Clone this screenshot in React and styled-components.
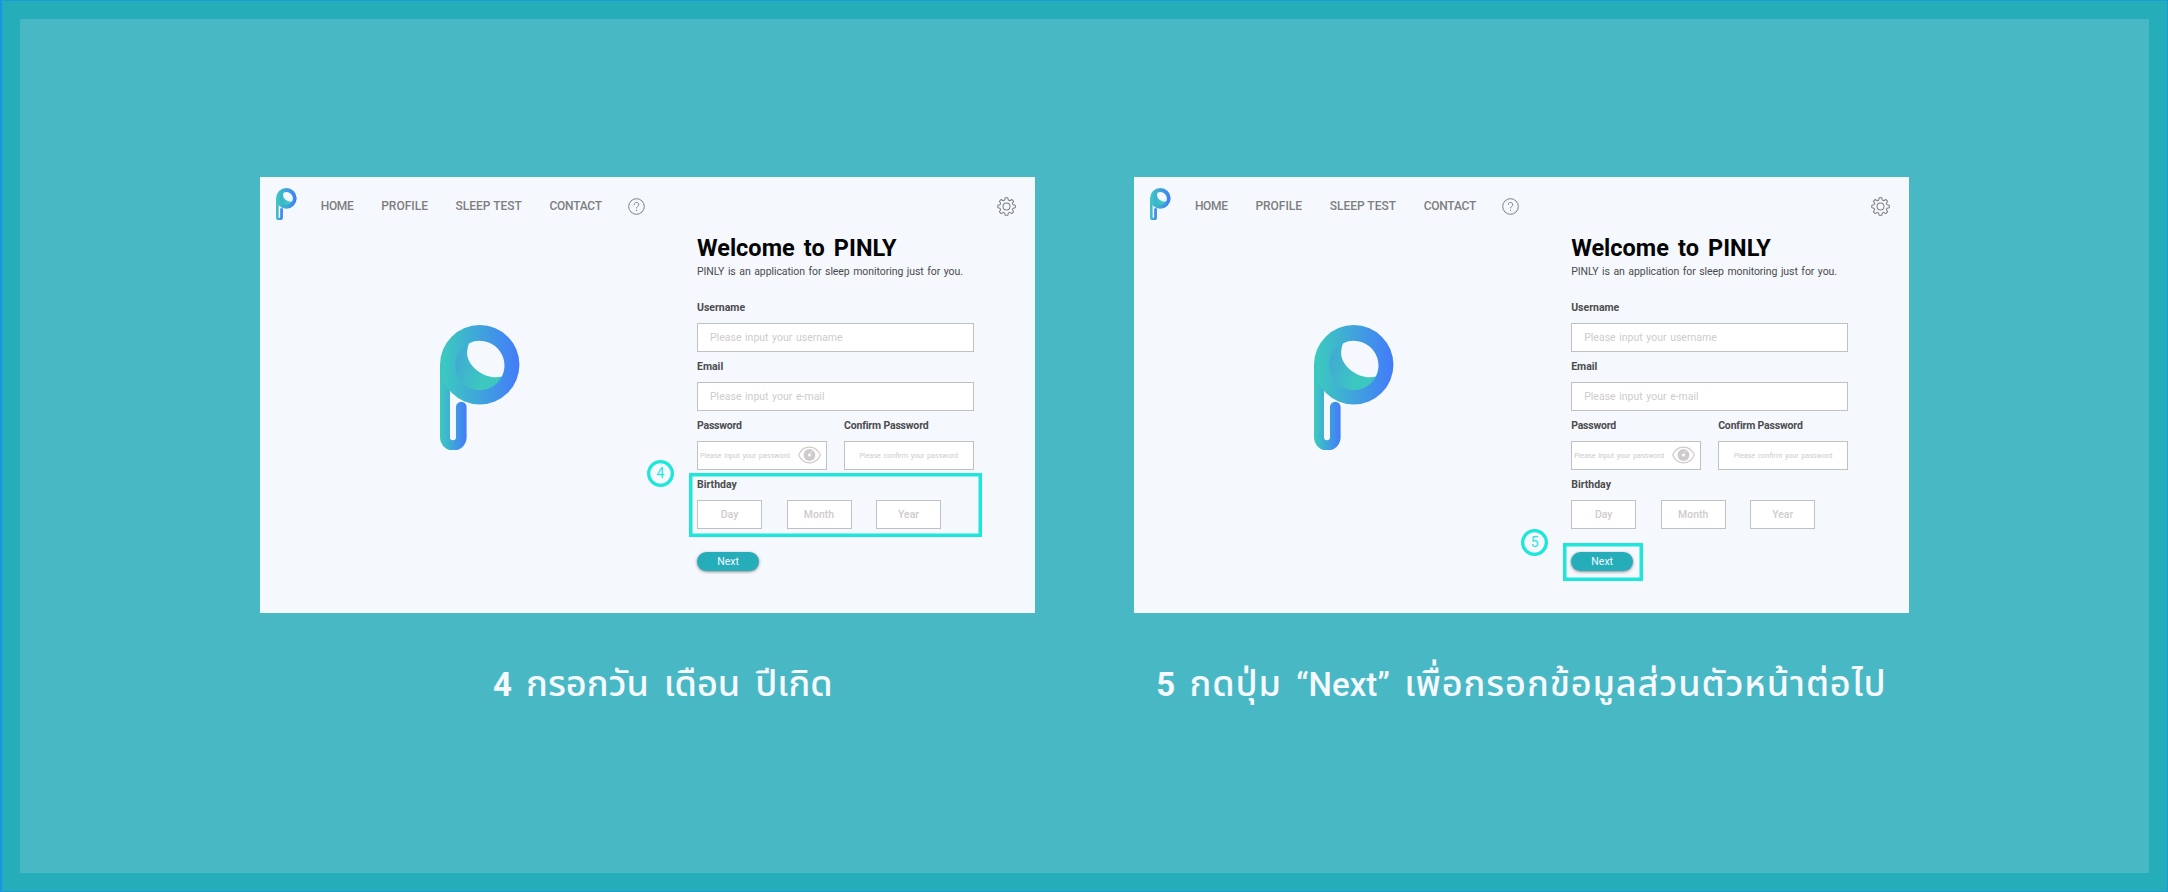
import React from "react";
import styled, { createGlobalStyle } from "styled-components";

const latin = `Roboto, "Liberation Sans", sans-serif`;

const GlobalStyle = createGlobalStyle`
  * { box-sizing: border-box; }
  body { margin: 0; font-family: ${latin}; }
`;

const Page = styled.div`
  width: 2168px;
  height: 892px;
  border: 1px solid #1e9ad6;
  border-left: 2px solid #1c94e4;
  background: #25adba;
  padding: 18px;
`;

const Board = styled.main`
  height: 854px;
  background: #48b8c5;
  display: flex;
  gap: 99.6px;
  padding: 158px 0 0 240px;
`;

const Step = styled.section`
  width: 774.6px;
  display: flex;
  flex-direction: column;
  align-items: center;
`;

const Card = styled.div`
  position: relative;
  width: 100%;
  height: 435.5px;
  background: #f5f9fe;
  display: flex;
  flex-direction: column;
`;

const TopBar = styled.header`
  height: 58px;
  flex: none;
  display: flex;
  align-items: center;
  padding: 0 18.5px 0 16px;
`;

const BrandMark = styled.span`
  display: flex;
  margin: -4px 24px 0 0;
`;

const Nav = styled.nav`
  display: flex;
  flex: 1;
  align-items: center;
`;

const NavItem = styled.span`
  width: ${(p) => p.$width}px;
  font-size: 12px;
  font-weight: 500;
  line-height: 14px;
  letter-spacing: ${(p) => p.$spacing || 0}px;
  white-space: nowrap;
  color: #7e7e7f;
`;

const Body = styled.div`
  flex: 1;
  display: flex;
`;

const Hero = styled.div`
  width: 437px;
  padding: 89.5px 0 0 180px;
`;

const Form = styled.div`
  width: 277px;
`;

const Title = styled.h1`
  margin: 0;
  font-size: 23.5px;
  line-height: 27px;
  font-weight: 700;
  word-spacing: 3.3px;
  white-space: nowrap;
  color: #050505;
`;

const Subtitle = styled.p`
  margin: 3px 0 22px;
  font-size: 10.5px;
  line-height: 14px;
  letter-spacing: -0.07px;
  word-spacing: 1px;
  white-space: nowrap;
  color: #4a4a4c;
`;

const Row = styled.div`
  display: flex;
  gap: ${(p) => p.$gap}px;
`;

const Field = styled.div`
  width: ${(p) => p.$width}px;
  height: 59px;
`;

const Label = styled.div`
  height: 14px;
  margin-bottom: 7.5px;
  font-size: 10.5px;
  line-height: 14px;
  font-weight: 700;
  letter-spacing: ${(p) => p.$spacing || 0}px;
  white-space: nowrap;
  color: #4c4c4e;
`;

const Box = styled.div`
  width: ${(p) => p.$width || 276.5}px;
  height: 29px;
  flex: none;
  display: flex;
  align-items: center;
  justify-content: ${(p) => (p.$center ? "center" : "flex-start")};
  padding-left: ${(p) => p.$inset || 0}px;
  border: 1px solid #bfc1c5;
  background: #fff;
  font-size: ${(p) => p.$size || 10.5}px;
  font-weight: ${(p) => p.$weight || 400};
  letter-spacing: ${(p) => p.$spacing || 0}px;
  word-spacing: 1px;
  white-space: nowrap;
  color: #cfcbcc;
`;

const EyeSlot = styled.span`
  display: flex;
  margin-left: auto;
  padding-right: 5px;
`;

const NextButton = styled.div`
  width: 62px;
  height: 19.5px;
  margin-top: 14.5px;
  border-radius: 10px;
  background: #25adba;
  box-shadow: 0 1px 3px rgba(60, 60, 60, 0.6);
  color: #f6f9ff;
  font-size: 10.5px;
  line-height: 19px;
  text-align: center;
`;

const Highlight = styled.div`
  position: absolute;
  left: ${(p) => p.$x}px;
  top: ${(p) => p.$y}px;
  width: ${(p) => p.$w}px;
  height: ${(p) => p.$h}px;
  box-shadow: inset 0 0 0 3.5px #1fe6da;
`;

const Badge = styled.div`
  position: absolute;
  left: 387px;
  top: ${(p) => p.$y}px;
  width: 27px;
  height: 27px;
  box-shadow: inset 0 0 0 3.3px #1fe6da;
  border-radius: 50%;
  color: #1fe6da;
  font-size: 14px;
  line-height: 27px;
  text-align: center;
`;

const Caption = styled.h2`
  margin: 46.5px 0 0 ${(p) => p.$shift || 0}px;
  font-size: 33px;
  line-height: 50px;
  font-weight: 500;
  word-spacing: 6px;
  white-space: nowrap;
  color: #f6f9ff;
`;

const Digit = styled.span`
  font-weight: 700;
`;

const Thai = styled.span`
  font-family: Roboto, "Noto Sans Thai", "Noto Sans", sans-serif;
  font-size: 36px;
  letter-spacing: ${(p) => p.$spacing || 0}px;
`;

function Logo({ width, id }) {
  const ring = `${id}-ring`;
  const stem = `${id}-stem`;
  const fold = `${id}-fold`;
  return (
    <svg width={width} height={width * 1.577} viewBox="60 44 239.5 377.7">
      <defs>
        <linearGradient id={ring} gradientUnits="userSpaceOnUse" x1="60" y1="0" x2="299" y2="0">
          <stop offset="0.05" stopColor="#3cc8c0" />
          <stop offset="1" stopColor="#437bfa" />
        </linearGradient>
        <linearGradient id={stem} gradientUnits="userSpaceOnUse" x1="60" y1="0" x2="140" y2="0">
          <stop offset="0.05" stopColor="#3cc8c0" />
          <stop offset="1" stopColor="#437bfa" />
        </linearGradient>
        <linearGradient id={fold} gradientUnits="userSpaceOnUse" x1="106" y1="175" x2="190" y2="205">
          <stop offset="0" stopColor="#40acd2" />
          <stop offset="1" stopColor="#3cc8c0" />
        </linearGradient>
      </defs>
      <path
        fill={`url(#${stem})`}
        d="M60 164V382a40 40 0 0 0 80 0V291a16 16 0 0 0-32 0V382a9 9 0 0 1-18 0V164Z"
      />
      <circle cx="179.5" cy="163.5" r="119.5" fill={`url(#${ring})`} />
      <circle cx="179.5" cy="166" r="74" fill={`url(#${fold})`} />
      <path
        fill="#f5f9fe"
        d="M148 99A74 74 0 0 1 246 199C200 212 136 168 142 122C143 112 145 104 148 99Z"
      />
    </svg>
  );
}

function HelpIcon() {
  return (
    <svg width="17" height="17" viewBox="0 0 17 17" fill="none" stroke="#7e7e7f" strokeWidth="1">
      <circle cx="8.5" cy="8.5" r="7.8" />
      <path d="M6.2 6.8C6.2 3.7 10.8 3.8 10.8 6.6C10.8 8.4 8.5 8.4 8.5 10.4M8.5 11.8V12.9" />
    </svg>
  );
}

function GearIcon() {
  return (
    <svg width="19" height="19" viewBox="0 0 24 24" fill="none" stroke="#7e7e7f" strokeWidth="1.3" strokeLinejoin="round">
      <circle cx="12" cy="12" r="4.4" />
      <path d="M10.3 1h3.4l.6 2.9 1.9.8 2.5-1.6 2.3 2.3-1.6 2.5.8 1.9 2.9.6v3.3l-2.9.6-.8 1.9 1.6 2.5-2.3 2.3-2.5-1.6-1.9.8-.6 2.9h-3.4l-.6-2.9-1.9-.8-2.5 1.6L3 18.7l1.6-2.5-.8-1.9L1 13.7v-3.3l2.8-.6.8-1.9L3 5.4l2.3-2.3 2.5 1.6 1.9-.8Z" />
    </svg>
  );
}

function EyeIcon() {
  return (
    <svg width="23" height="18" viewBox="0 0 23 18" fill="none">
      <path d="M.7 9C5-1.5 18-1.5 22.3 9C18 19.5 5 19.5.7 9Z" stroke="#cfcbcc" strokeWidth="1.2" />
      <circle cx="11.5" cy="9" r="5.9" fill="#cfcbcc" />
      <circle cx="11.5" cy="9" r="1.5" fill="#fff" />
      <path d="M12.2 7.2L14.3 4.6" stroke="#fff" strokeWidth="0.6" />
    </svg>
  );
}

function SignUpCard({ id, children }) {
  return (
    <Card>
      <TopBar>
        <BrandMark><Logo width={20.7} id={`${id}-small`} /></BrandMark>
        <Nav>
          <NavItem $width={60.5} $spacing={-0.3}>HOME</NavItem>
          <NavItem $width={74.3}>PROFILE</NavItem>
          <NavItem $width={94}>SLEEP TEST</NavItem>
          <NavItem $width={78.4} $spacing={-0.25}>CONTACT</NavItem>
          <HelpIcon />
        </Nav>
        <GearIcon />
      </TopBar>
      <Body>
        <Hero><Logo width={79.6} id={`${id}-large`} /></Hero>
        <Form>
          <Title>Welcome to PINLY</Title>
          <Subtitle>PINLY is an application for sleep monitoring just for you.</Subtitle>
          <Field>
            <Label>Username</Label>
            <Box $inset={12}>Please input your username</Box>
          </Field>
          <Field>
            <Label>Email</Label>
            <Box $inset={12}>Please input your e-mail</Box>
          </Field>
          <Row $gap={17.3}>
            <Field $width={129.7}>
              <Label $spacing={-0.2}>Password</Label>
              <Box $width={129.7} $inset={2} $size={7.3} $spacing={-0.1}>
                Please input your password
                <EyeSlot><EyeIcon /></EyeSlot>
              </Box>
            </Field>
            <Field $width={129.7}>
              <Label $spacing={-0.17}>Confirm Password</Label>
              <Box $width={129.7} $size={7.3} $spacing={-0.1} $center>Please confirm your password</Box>
            </Field>
          </Row>
          <Field>
            <Label>Birthday</Label>
            <Row $gap={24.5}>
              <Box $width={65} $weight={500} $center>Day</Box>
              <Box $width={65} $weight={500} $center>Month</Box>
              <Box $width={65} $weight={500} $center>Year</Box>
            </Row>
          </Field>
          <NextButton>Next</NextButton>
        </Form>
      </Body>
      {children}
    </Card>
  );
}

export default function App() {
  return (
    <>
      <GlobalStyle />
      <Page>
        <Board>
          <Step>
            <SignUpCard id="birthday">
              <Highlight $x={429.3} $y={296} $w={292.7} $h={63.7} />
              <Badge $y={282.5}>4</Badge>
            </SignUpCard>
            <Caption $shift={31}><Digit>4</Digit> <Thai>กรอกวัน เดือน ปีเกิด</Thai></Caption>
          </Step>
          <Step>
            <SignUpCard id="next">
              <Highlight $x={429} $y={365.5} $w={80} $h={38} />
              <Badge $y={352}>5</Badge>
            </SignUpCard>
            <Caption>
              <Digit>5</Digit> <Thai $spacing={0.9}>กดปุ่ม</Thai> “Next” <Thai $spacing={0.9}>เพื่อกรอกข้อมูลส่วนตัวหน้าต่อไป</Thai>
            </Caption>
          </Step>
        </Board>
      </Page>
    </>
  );
}
